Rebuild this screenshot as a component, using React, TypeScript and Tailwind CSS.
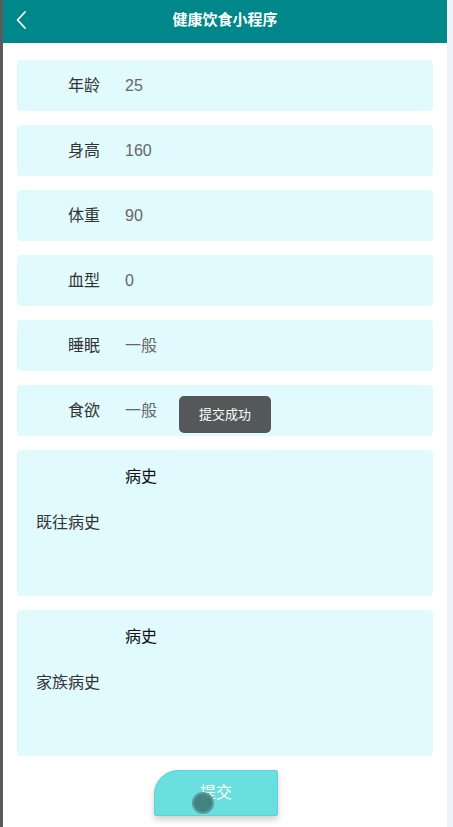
import React from 'react';

const rows = [
  { label: '年龄', value: '25' },
  { label: '身高', value: '160' },
  { label: '体重', value: '90' },
  { label: '血型', value: '0' },
  { label: '睡眠', value: '一般' },
  { label: '食欲', value: '一般' },
];

const areas = [
  { label: '既往病史', value: '病史' },
  { label: '家族病史', value: '病史' },
];

const font = { fontFamily: '"Liberation Sans", "Noto Sans CJK SC", sans-serif' };

export default function App() {
  return (
    <div className="flex h-[827px] w-[453px] overflow-hidden bg-white" style={font}>
      <div className="w-[3px] bg-[#5a5a5a]" />
      <div className="flex w-[444px] flex-col">
        {/* Header */}
        <div className="relative flex h-[43px] items-center justify-center bg-[#00878a] pb-[2px]">
          <svg className="absolute left-[11px] top-[10px]" width="16" height="20" viewBox="0 0 16 20" fill="none">
            <path d="M11 2 L3.5 10 L11 18" stroke="white" strokeWidth="1.8" strokeLinecap="round" strokeLinejoin="round" />
          </svg>
          <span className="text-[15px] font-bold text-white">健康饮食小程序</span>
        </div>

        {/* Form */}
        <div className="relative flex flex-col gap-[14px] px-[14px] pt-[17px]">
          {rows.map((r) => (
            <div key={r.label} className="flex h-[51px] items-center rounded-[4px] bg-[#e1fafd] pt-[1px] pl-[19px]">
              <span className="w-[64px] text-right text-[16px] text-[#333333]">{r.label}</span>
              <span className="ml-[25px] text-[16px] text-[#666666]">{r.value}</span>
            </div>
          ))}

          {areas.map((a) => (
            <div key={a.label} className="flex h-[146px] rounded-[4px] bg-[#e1fafd] pl-[19px]">
              <span className="w-[64px] self-center text-right text-[16px] text-[#333333]">{a.label}</span>
              <span className="ml-[25px] pt-[15px] text-[16px] leading-[24px] text-[#111111]">{a.value}</span>
            </div>
          ))}

          {/* Toast */}
          <div className="absolute left-[176px] top-[353px] flex h-[37px] w-[92px] items-center justify-center rounded-[5px] bg-[#555858]">
            <span className="text-[13px] text-white">提交成功</span>
          </div>

          {/* Submit */}
          <div className="flex pl-[137px]">
            <button className="relative flex h-[46px] w-[124px] items-center justify-center rounded-tl-[24px] rounded-tr-[2px] rounded-br-[2px] rounded-bl-[2px] border border-[#5fd3d3] bg-[#69dfdf] shadow-[0_4px_6px_rgba(0,0,0,0.18)]">
              <span className="text-[16px] text-white">提交</span>
              <span className="absolute left-[37px] top-[21px] h-[22px] w-[22px] rounded-full border-2 border-[#5e9a9a] bg-[#3f7878]/90" />
            </button>
          </div>
        </div>
      </div>
      <div className="flex-1 bg-[#eef2f9]" />
    </div>
  );
}
